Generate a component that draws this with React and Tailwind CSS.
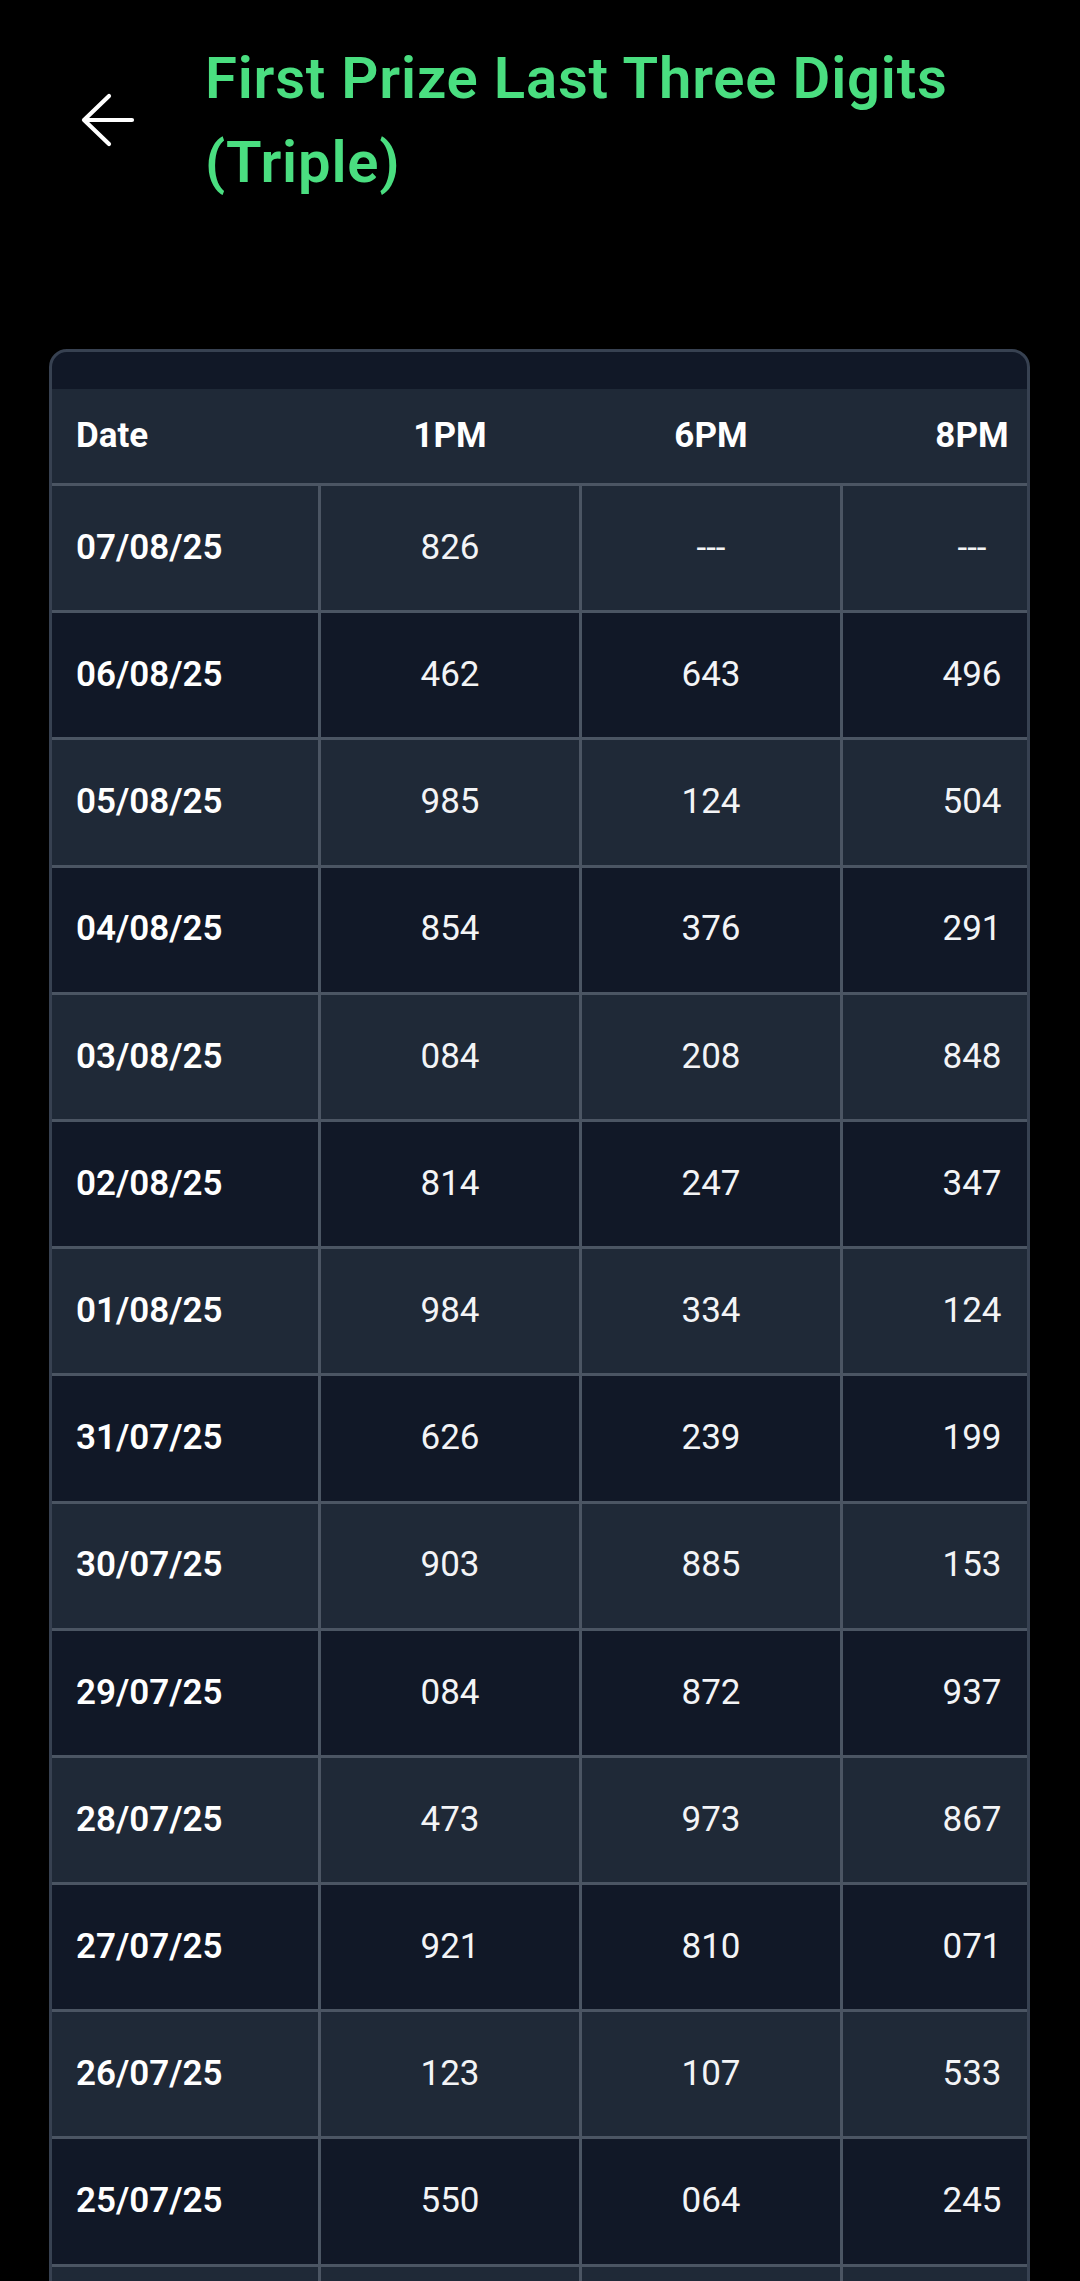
import React from "react";

const rows = [
  ["07/08/25", "826", "---", "---"],
  ["06/08/25", "462", "643", "496"],
  ["05/08/25", "985", "124", "504"],
  ["04/08/25", "854", "376", "291"],
  ["03/08/25", "084", "208", "848"],
  ["02/08/25", "814", "247", "347"],
  ["01/08/25", "984", "334", "124"],
  ["31/07/25", "626", "239", "199"],
  ["30/07/25", "903", "885", "153"],
  ["29/07/25", "084", "872", "937"],
  ["28/07/25", "473", "973", "867"],
  ["27/07/25", "921", "810", "071"],
  ["26/07/25", "123", "107", "533"],
  ["25/07/25", "550", "064", "245"],
  ["24/07/25", "318", "592", "760"],
  ["23/07/25", "447", "219", "638"],
];

function BackArrow() {
  return (
    <svg width="56" height="56" viewBox="0 0 56 56" fill="none" className="shrink-0">
      <path
        d="M52 28H4M29 4L4 28L29 52"
        stroke="white"
        strokeWidth="4.2"
        strokeLinecap="round"
        strokeLinejoin="round"
      />
    </svg>
  );
}

export default function App() {
  return (
    <div className="min-h-[2281px] w-[1080px] bg-black font-['Roboto',sans-serif] overflow-hidden">
      <div className="flex items-center pt-[36px] pl-[80px] pr-[40px] gap-[69px]">
        <BackArrow />
        <h1 className="text-[58px] leading-[84px] font-semibold tracking-[0.8px] text-[#4ade80]">
          First Prize Last Three Digits (Triple)
        </h1>
      </div>

      <div className="mt-[145px] ml-[49px] w-[981px] rounded-[18px] border-[3px] border-[#374151] bg-[#111827] overflow-hidden pt-[37px]">
        <div className="overflow-hidden">
          <div className="w-[1048px]">
            <div className="flex h-[97px] bg-[#1f2937] border-b-[3px] border-[#4b5563] text-[35px] font-bold text-white">
              <div className="w-[269px] shrink-0 flex items-center px-[24px]">Date</div>
              <div className="w-[261px] shrink-0 flex items-center justify-center pr-[3px]">1PM</div>
              <div className="w-[261px] shrink-0 flex items-center justify-center pr-[3px]">6PM</div>
              <div className="w-[258px] shrink-0 flex items-center justify-center">8PM</div>
            </div>
            {rows.map((r, i) => (
              <div
                key={r[0]}
                className={`flex h-[127.2px] border-b-[3px] border-[#4b5563] text-[35px] text-white ${
                  i % 2 === 0 ? "bg-[#1f2937]" : "bg-[#111827]"
                }`}
              >
                <div className="w-[269px] shrink-0 flex items-center px-[24px] border-r-[3px] border-[#4b5563] font-semibold">
                  {r[0]}
                </div>
                <div className="w-[261px] shrink-0 flex items-center justify-center border-r-[3px] border-[#4b5563] text-gray-100">
                  {r[1]}
                </div>
                <div className="w-[261px] shrink-0 flex items-center justify-center border-r-[3px] border-[#4b5563] text-gray-100">
                  {r[2]}
                </div>
                <div className="w-[258px] shrink-0 flex items-center justify-center text-gray-100">
                  {r[3]}
                </div>
              </div>
            ))}
          </div>
        </div>
      </div>
    </div>
  );
}
